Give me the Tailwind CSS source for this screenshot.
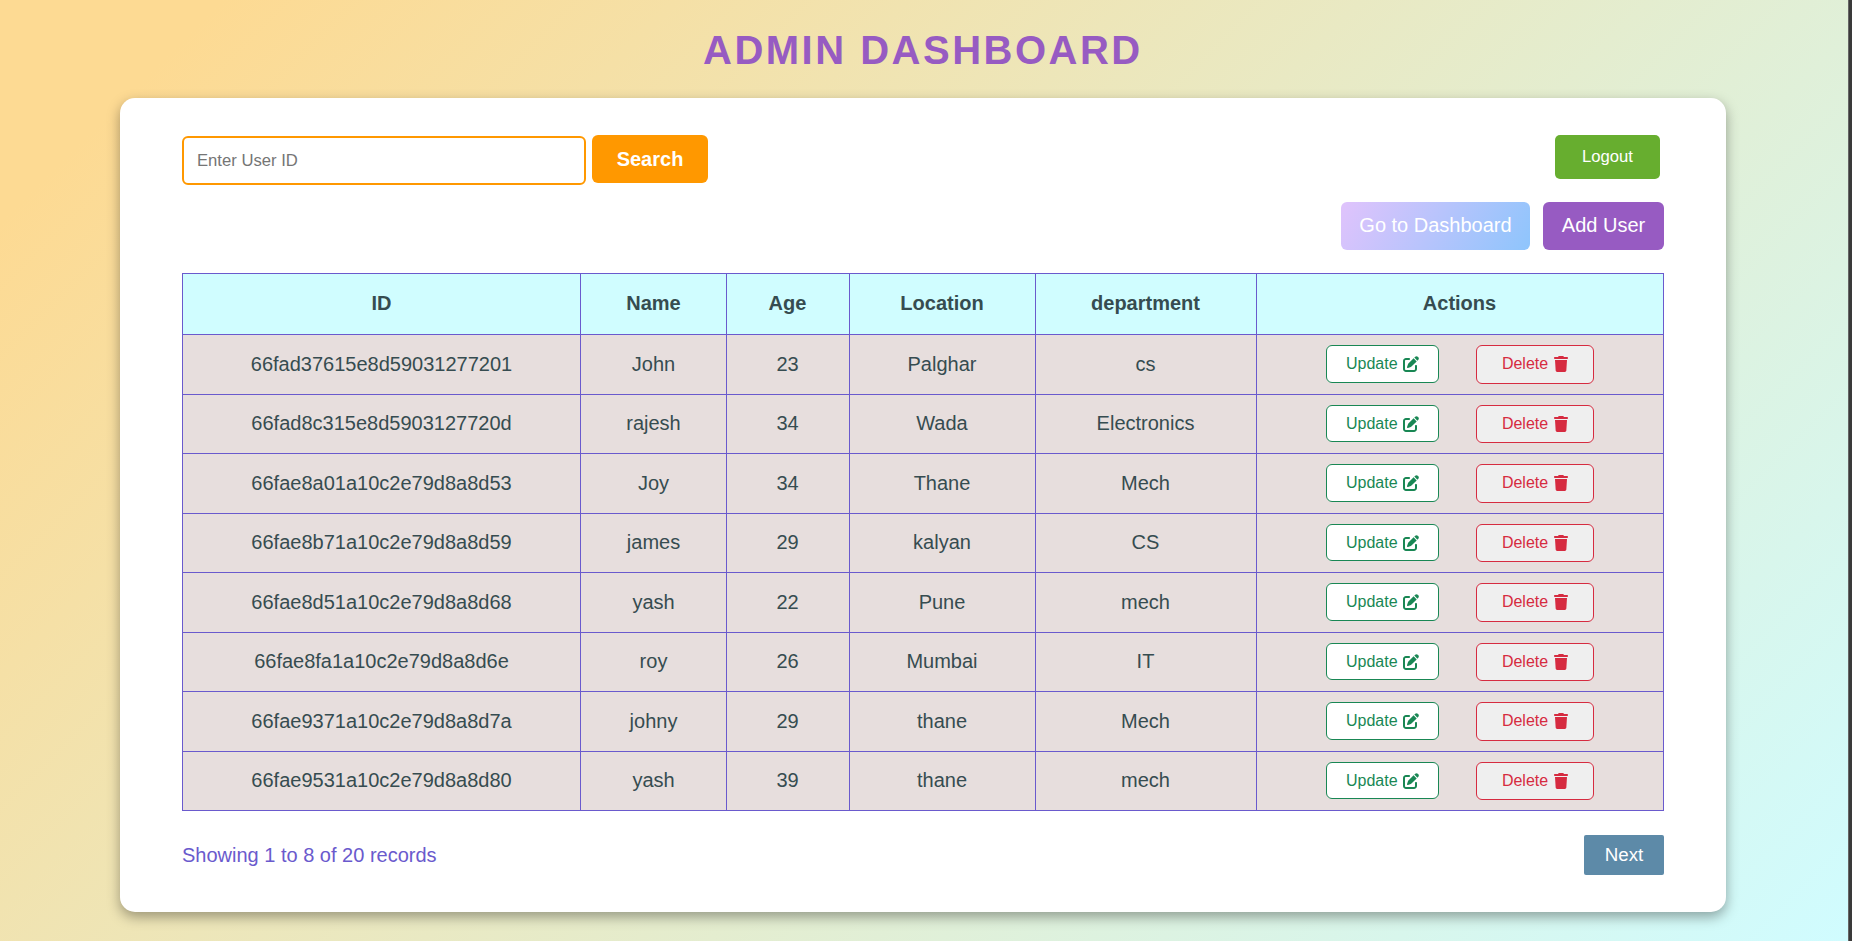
<!DOCTYPE html>
<html lang="en"><head><meta charset="utf-8"><title>Admin Dashboard</title>
<script src="https://cdn.jsdelivr.net/npm/@tailwindcss/browser@4"></script></head>
<body class="flex h-[941px] w-[1852px] overflow-hidden font-['Liberation_Sans',Arial,sans-serif]">
<svg class="hidden"><symbol id="edit" viewBox="0 0 512 512"><path fill="currentColor" d="M471.6 21.7c-21.9-21.9-57.3-21.9-79.2 0L362.3 51.7l97.900 97.900 30.100-30.100c21.900-21.900 21.900-57.300 0-79.200L471.600 21.700zm-299.200 220c-6.100 6.100-10.800 13.600-13.500 21.900l-29.600 88.800c-2.900 8.600-.6 18.100 5.800 24.600s15.900 8.700 24.600 5.800l88.800-29.600c8.200-2.700 15.700-7.400 21.900-13.500L437.700 172.300 339.700 74.300 172.400 241.700zM96 64C43 64 0 107 0 160V416c0 53 43 96 96 96H352c53 0 96-43 96-96V320c0-17.700-14.300-32-32-32s-32 14.300-32 32v96c0 17.700-14.300 32-32 32H96c-17.700 0-32-14.300-32-32V160c0-17.700 14.300-32 32-32h96c17.700 0 32-14.300 32-32s-14.300-32-32-32H96z"/></symbol>
<symbol id="trash" viewBox="0 0 448 512"><path fill="currentColor" d="M135.200 17.700L128 32H32C14.300 32 0 46.300 0 64S14.300 96 32 96H416c17.700 0 32-14.300 32-32s-14.300-32-32-32H320l-7.200-14.300C307.400 6.800 296.300 0 284.200 0H163.800c-12.100 0-23.200 6.800-28.600 17.700zM416 128H32L53.200 467c1.600 25.300 22.600 45 47.900 45H346.900c25.300 0 46.300-19.700 47.900-45L416 128z"/></symbol></svg>
<div class="flex w-[1848px] flex-col bg-[linear-gradient(135deg,#fdda93_8%,#d0fcff_100%)]">
<h1 class="mt-[27px] ml-[703px] h-[46px] whitespace-nowrap text-[40px] leading-[46px] font-bold tracking-[2.5px] text-[#975bc2]">ADMIN DASHBOARD</h1>
<main class="mt-[25px] ml-[120px] flex h-[814px] w-[1606px] flex-col rounded-[15px] bg-white px-[62px] pt-[37px] shadow-[0_5px_13px_rgba(0,0,0,0.35)]">
<div class="flex h-[67px] items-start">
<input class="mt-px h-[49px] w-[404px] rounded-[6px] border-2 border-[#ff9800] px-[13px] text-[16.67px] placeholder-[#757575]" placeholder="Enter User ID">
<button class="ml-[6px] h-12 w-[116px] rounded-[6px] bg-[#ff9800] text-[20px] font-bold text-white">Search</button>
<button class="ml-auto mr-1 h-11 w-[105px] rounded-[5px] bg-[#67ae2f] pb-0.5 text-[16.67px] text-white">Logout</button>
</div>
<div class="flex h-[71px] justify-end gap-[13px] text-[20px] text-white">
<button class="h-12 w-[189px] rounded-[6px] bg-[linear-gradient(120deg,#e0c3fc,#8ec5fc)] pb-0.5">Go to Dashboard</button>
<button class="h-12 w-[121px] rounded-[6px] bg-[#975bc2] pb-0.5">Add User</button>
</div>
<div id="grid" class="grid w-[1482px] grid-cols-[398px_146px_123px_186px_221px_407px] grid-rows-[61px_repeat(8,59.5px)] border-t border-l border-[#6a5acd] text-[20px] text-[#364c50]"></div>
<div class="mt-6 flex h-10 items-center justify-between"><span class="text-[20px] text-[#6a5acd]">Showing 1 to 8 of 20 records</span><button class="h-10 w-20 rounded-[2px] bg-[#5d8aa8] text-[18.75px] text-white">Next</button></div>
</main>
</div>
<div class="w-1 border-l border-[#666] bg-[#3a3a3a]"></div>
<script>
const head=['ID','Name','Age','Location','department','Actions'];
const rows=[['66fad37615e8d59031277201','John','23','Palghar','cs'],['66fad8c315e8d5903127720d','rajesh','34','Wada','Electronics'],['66fae8a01a10c2e79d8a8d53','Joy','34','Thane','Mech'],['66fae8b71a10c2e79d8a8d59','james','29','kalyan','CS'],['66fae8d51a10c2e79d8a8d68','yash','22','Pune','mech'],['66fae8fa1a10c2e79d8a8d6e','roy','26','Mumbai','IT'],['66fae9371a10c2e79d8a8d7a','johny','29','thane','Mech'],['66fae9531a10c2e79d8a8d80','yash','39','thane','mech']];
const inset=i=>i<2?'pr-0':'pr-px';
document.getElementById('grid').innerHTML=head.map((t,i)=>`<div class="flex items-center justify-center border-r border-b border-[#6a5acd] bg-[#d0fdff] pb-0.5 font-bold ${inset(i)}">${t}</div>`).join('')+rows.map(r=>r.map((t,i)=>`<div class="flex items-center justify-center border-r border-b border-[#6a5acd] bg-[#e7dedd] pb-px ${inset(i)}">${t}</div>`).join('')+`<div class="flex items-start border-r border-b border-[#6a5acd] bg-[#e7dedd] pt-[10px] pl-[69px] text-[16px]"><button class="flex h-[37.500px] w-[113px] items-center justify-center gap-[5.500px] rounded-[6px] border border-[#198754] bg-white pt-px text-[#198754]"><span>Update</span><svg class="size-4"><use href="#edit"/></svg></button><button class="ml-[37px] flex h-[38.500px] w-[118px] items-center justify-center gap-[6px] rounded-[6px] border border-[#d62b40] bg-[#efefef] text-[#d62b40]"><span>Delete</span><svg class="h-4 w-[14px]"><use href="#trash"/></svg></button></div>`).join('');
</script>
</body></html>
